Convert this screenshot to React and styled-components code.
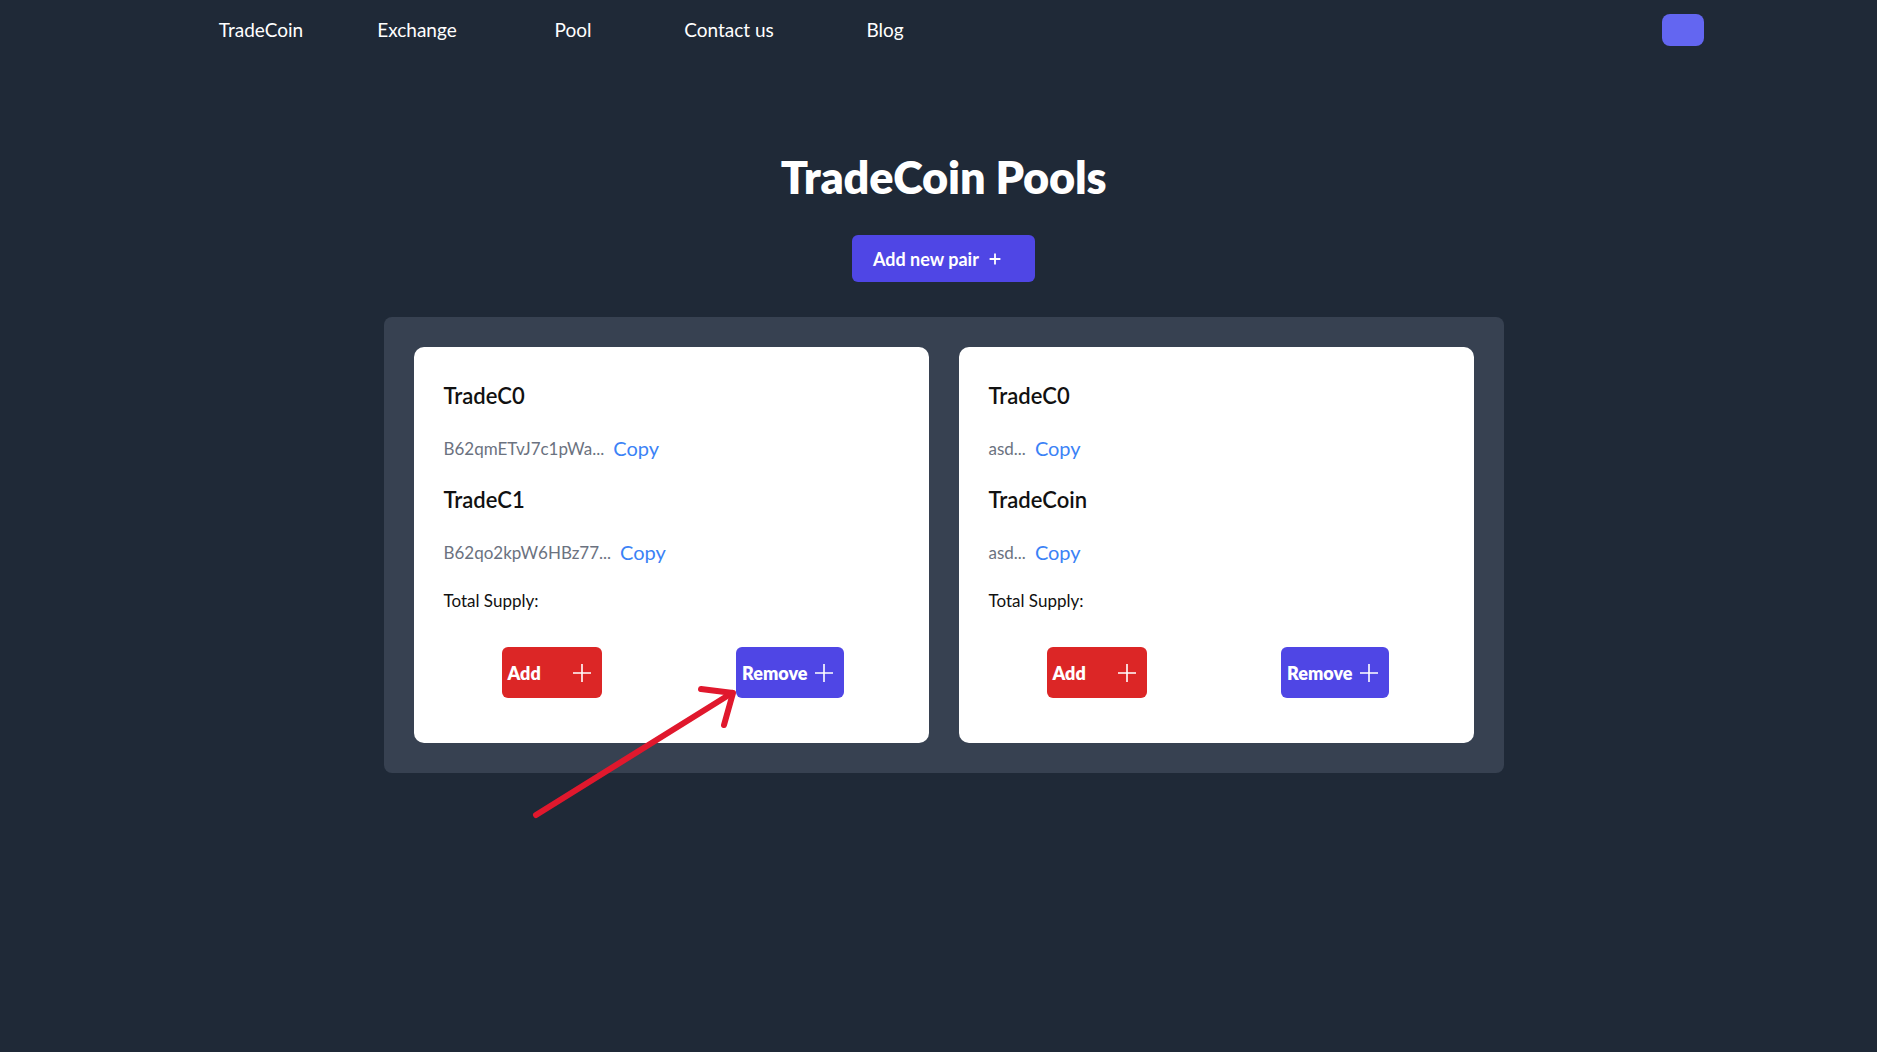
import React from 'react';
import styled, { createGlobalStyle } from 'styled-components';

const GlobalStyle = createGlobalStyle`
  html, body {
    margin: 0;
    padding: 0;
    background: #1f2937;
    font-family: Lato, "Open Sans", "Noto Sans", sans-serif;
  }
  #root {
    min-height: 1052px;
    position: relative;
  }
`;

const Page = styled.div`
  min-height: 1052px;
  background: #1f2937;
  color: #fff;
`;

const NavBar = styled.nav`
  height: 58px;
  display: flex;
  align-items: center;
  padding: 0 173px 0 183px;
`;

const NavList = styled.ul`
  display: flex;
  list-style: none;
  margin: 0;
  padding: 0;
`;

const NavItem = styled.li`
  width: 156px;
  text-align: center;
  font-size: 19px;
  color: #fff;
`;

const WalletButton = styled.button`
  margin-left: auto;
  width: 42px;
  height: 32px;
  border: none;
  border-radius: 8px;
  background: #6366f1;
  margin-top: 2px;
`;

const Main = styled.main`
  display: flex;
  flex-direction: column;
  align-items: center;
  padding-left: 10px;
`;

const Title = styled.h1`
  margin: 91px 0 0;
  font-size: 45px;
  line-height: 56px;
  font-weight: 800;
  letter-spacing: -0.2px;
  color: #fff;
`;

const PairButton = styled.button`
  margin-top: 30px;
  height: 47px;
  width: 183px;
  border: none;
  border-radius: 6px;
  background: #4f46e5;
  color: #fff;
  font-family: inherit;
  font-size: 18px;
  font-weight: 700;
  display: flex;
  align-items: center;
  justify-content: flex-start;
  gap: 10px;
  padding: 0 0 0 21px;
`;

const Panel = styled.section`
  margin-top: 35px;
  background: #374151;
  border-radius: 8px;
  padding: 30px;
  display: grid;
  grid-template-columns: 515px 515px;
  gap: 30px;
`;

const Card = styled.div`
  background: #fff;
  border-radius: 10px;
  height: 396px;
  box-sizing: border-box;
  padding: 33px 30px 0;
  display: flex;
  flex-direction: column;
  gap: 22px;
  color: #111827;
`;

const TokenName = styled.h3`
  margin: 0;
  font-size: 22px;
  line-height: 32px;
  font-weight: 600;
  color: #111;
`;

const AddressRow = styled.div`
  height: 28px;
  display: flex;
  align-items: center;
  gap: 9px;
`;

const Address = styled.span`
  font-size: 17px;
  color: #6b7280;
`;

const CopyLink = styled.span`
  font-size: 20px;
  color: #3b82f6;
`;

const Supply = styled.div`
  font-size: 17px;
  line-height: 26px;
  color: #111;
`;

const ActionRow = styled.div`
  margin-top: 11px;
  display: flex;
  justify-content: space-between;
  padding: 0 55px 0 58px;
`;

const ActionButton = styled.button`
  height: 51px;
  border: none;
  border-radius: 6px;
  background: ${p => p.$tone === 'red' ? '#dc2626' : '#4f46e5'};
  color: #fff;
  font-family: inherit;
  font-size: 18px;
  font-weight: 800;
  display: flex;
  align-items: center;
  gap: ${p => p.$gap}px;
  padding: 0 10px 0 6px;
`;

const ArrowLayer = styled.svg`
  position: absolute;
  left: 0;
  top: 0;
  pointer-events: none;
`;

const Plus = ({ size = 20, stroke = 1.6 }) => (
  <svg width={size} height={size} viewBox="0 0 20 20" fill="none">
    <path d="M10 1v18M1 10h18" stroke="#fff" strokeWidth={stroke * 20 / size} />
  </svg>
);

const pools = [
  {
    a: 'TradeC0', aAddr: 'B62qmETvJ7c1pWa...',
    b: 'TradeC1', bAddr: 'B62qo2kpW6HBz77...',
  },
  {
    a: 'TradeC0', aAddr: 'asd...',
    b: 'TradeCoin', bAddr: 'asd...',
  },
];

function PoolCard({ pool }) {
  return (
    <Card>
      <TokenName>{pool.a}</TokenName>
      <AddressRow>
        <Address>{pool.aAddr}</Address>
        <CopyLink>Copy</CopyLink>
      </AddressRow>
      <TokenName>{pool.b}</TokenName>
      <AddressRow>
        <Address>{pool.bAddr}</Address>
        <CopyLink>Copy</CopyLink>
      </AddressRow>
      <Supply>Total Supply:</Supply>
      <ActionRow>
        <ActionButton $tone="red" $gap={31}>Add <Plus /></ActionButton>
        <ActionButton $tone="blue" $gap={6}>Remove <Plus /></ActionButton>
      </ActionRow>
    </Card>
  );
}

export default function App() {
  return (
    <Page>
      <GlobalStyle />
      <NavBar>
        <NavList>
          <NavItem>TradeCoin</NavItem>
          <NavItem>Exchange</NavItem>
          <NavItem>Pool</NavItem>
          <NavItem>Contact us</NavItem>
          <NavItem>Blog</NavItem>
        </NavList>
        <WalletButton />
      </NavBar>
      <Main>
        <Title>TradeCoin Pools</Title>
        <PairButton>Add new pair <Plus size={12} stroke={1.8} /></PairButton>
        <Panel>
          {pools.map((p, i) => <PoolCard key={i} pool={p} />)}
        </Panel>
      </Main>
      <ArrowLayer width="1877" height="1052" viewBox="0 0 1877 1052">
        <g stroke="#e0182d" strokeWidth="6" strokeLinecap="round" fill="none">
          <path d="M536 815L732 693" />
          <path d="M701 689L733 693L724 725" strokeLinejoin="round" />
        </g>
      </ArrowLayer>
    </Page>
  );
}
